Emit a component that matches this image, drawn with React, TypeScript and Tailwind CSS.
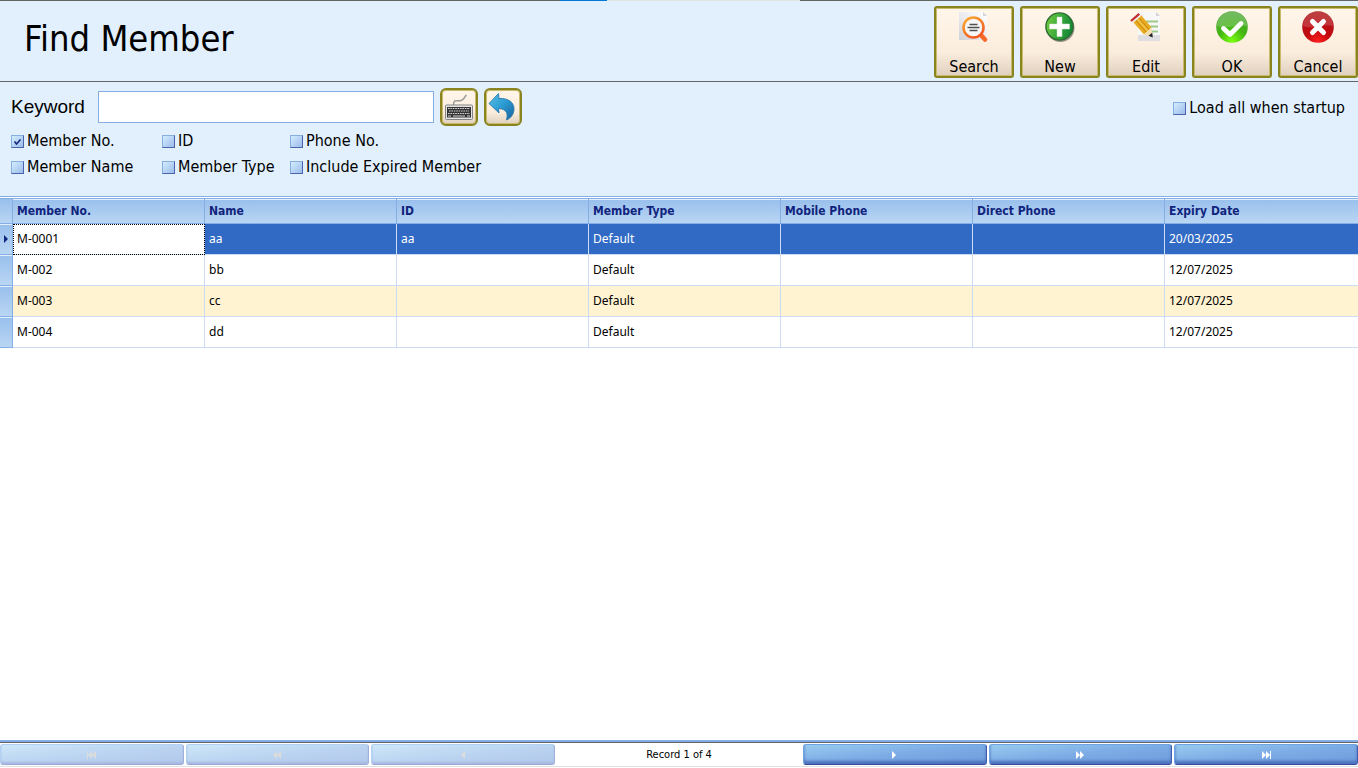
import React, { useState } from "react";
import clsx from "clsx";

interface Member {
  no: string;
  name: string;
  id: string;
  type: string;
  mobile: string;
  direct: string;
  expiry: string;
}

const MEMBERS: Member[] = [
  { no: "M-0001", name: "aa", id: "aa", type: "Default", mobile: "", direct: "", expiry: "20/03/2025" },
  { no: "M-002", name: "bb", id: "", type: "Default", mobile: "", direct: "", expiry: "12/07/2025" },
  { no: "M-003", name: "cc", id: "", type: "Default", mobile: "", direct: "", expiry: "12/07/2025" },
  { no: "M-004", name: "dd", id: "", type: "Default", mobile: "", direct: "", expiry: "12/07/2025" },
];

const COLUMNS: { key: keyof Member; title: string }[] = [
  { key: "no", title: "Member No." },
  { key: "name", title: "Name" },
  { key: "id", title: "ID" },
  { key: "type", title: "Member Type" },
  { key: "mobile", title: "Mobile Phone" },
  { key: "direct", title: "Direct Phone" },
  { key: "expiry", title: "Expiry Date" },
];

function SearchIcon() {
  return (
    <svg width="32" height="32" viewBox="0 0 32 32">
      <defs>
        <linearGradient id="page" x1="0" y1="1" x2="1" y2="0">
          <stop offset="0" stopColor="#cfd2d9" />
          <stop offset="0.5" stopColor="#ececf0" />
          <stop offset="1" stopColor="#fff" />
        </linearGradient>
        <linearGradient id="lens" x1="0" y1="0" x2="0.6" y2="1">
          <stop offset="0" stopColor="#fbae35" />
          <stop offset="1" stopColor="#f15a24" />
        </linearGradient>
      </defs>
      <path d="M1 1h24l4 4v24H1z" fill="url(#page)" />
      <path d="M25 1v4h4z" fill="#d5d5d9" />
      <path d="M22.500 23.500l4.500 5" stroke="#f4692a" strokeWidth="4.500" strokeLinecap="round" />
      <circle cx="15.500" cy="16.500" r="10" fill="#f7f7f7" stroke="url(#lens)" strokeWidth="2.600" />
      <path d="M11.500 13.500h8M9.500 16.500h12M11.500 19.500h8" stroke="#505050" strokeWidth="1.300" />
    </svg>
  );
}

function NewIcon() {
  return (
    <svg width="32" height="32" viewBox="0 0 32 32">
      <defs>
        <linearGradient id="plus" x1="0" y1="0" x2="1" y2="0.3">
          <stop offset="0" stopColor="#7fce3c" />
          <stop offset="0.5" stopColor="#3fae3c" />
          <stop offset="1" stopColor="#178a35" />
        </linearGradient>
      </defs>
      <circle cx="16.500" cy="17" r="14" fill="#00000066" />
      <circle cx="15.500" cy="15.500" r="13.600" fill="url(#plus)" stroke="#2b6b34" strokeWidth="1.400" />
      <path d="M13 6h5v7h7.500v5H18v7.500h-5V18H5.500v-5H13z" fill="#fff" stroke="#cfe6c8" strokeWidth="0.500" />
    </svg>
  );
}

function EditIcon() {
  return (
    <svg width="32" height="32" viewBox="0 0 32 32">
      <path d="M8 1h18l4 4v25H8z" fill="#f7f7f8" />
      <path d="M8 24h22v6H8z" fill="#dfdfe3" />
      <path d="M26 1v4h4z" fill="#d4d4d8" />
      <path d="M16 10.500h12M18 15.500h10M20 20.500h8" stroke="#9fc98a" strokeWidth="1.800" />
      <path d="M3 11l8-7 10.500 12.500L14 23.500z" fill="#e9ab20" />
      <path d="M5.500 9L16.500 21.500M8.500 6.500L19.500 19" stroke="#b97c0d" strokeWidth="0.800" />
      <path d="M7 7.800L18 20.300" stroke="#f4c64c" strokeWidth="1.300" />
      <path d="M1 10L9.300 2.800" stroke="#c1272d" strokeWidth="2.200" />
      <path d="M2.600 11.500L10.600 4.400" stroke="#ececec" strokeWidth="1.300" />
      <path d="M14 23.500l7.500-7L22.500 26z" fill="#f3deb2" />
      <path d="M18.500 24.800l3.700-3 .6 4.700z" fill="#222" />
    </svg>
  );
}

function OkIcon() {
  return (
    <svg width="32" height="32" viewBox="0 0 32 32">
      <defs>
        <radialGradient id="ok" cx="0.5" cy="0.95" r="0.9">
          <stop offset="0" stopColor="#7bff10" />
          <stop offset="0.5" stopColor="#43b512" />
          <stop offset="1" stopColor="#4fa838" />
        </radialGradient>
      </defs>
      <circle cx="16" cy="16" r="15.800" fill="url(#ok)" />
      <path d="M1 15a15 14.500 0 0 1 30 0c-8-3-18 4-30 0z" fill="#fff" opacity="0.2" />
      <path d="M7.500 17.500l6.500 6L25 12.500" fill="none" stroke="#fff" strokeWidth="4.800" strokeLinecap="round" strokeLinejoin="round" />
    </svg>
  );
}

function CancelIcon() {
  return (
    <svg width="32" height="32" viewBox="0 0 32 32">
      <defs>
        <radialGradient id="cancel" cx="0.5" cy="0.98" r="0.9">
          <stop offset="0" stopColor="#ff2020" />
          <stop offset="0.45" stopColor="#c0090f" />
          <stop offset="1" stopColor="#b0181c" />
        </radialGradient>
      </defs>
      <circle cx="16" cy="16" r="15.800" fill="url(#cancel)" />
      <path d="M1 15a15 14.500 0 0 1 30 0c-8-3-18 4-30 0z" fill="#fff" opacity="0.16" />
      <path d="M10.500 10.500l11 11M21.500 10.500l-11 11" stroke="#fff" strokeWidth="5" strokeLinecap="round" />
    </svg>
  );
}

function KeyboardIcon() {
  return (
    <svg width="30" height="30" viewBox="0 0 30 30">
      <path d="M9.500 13C9.500 6 13 10 17 8.500S20 5 22.500 3" fill="none" stroke="#9a9a9a" strokeWidth="1.500" />
      <rect x="1.500" y="13" width="27" height="14.500" rx="1" fill="#e4e4e4" stroke="#858585" />
      <rect x="3" y="15" width="24" height="10.500" fill="#333" />
      <path d="M4 16.500h22M5 19h20M4 21.500h22" stroke="#d8d8d8" strokeWidth="1.200" strokeDasharray="1.600 0.800" />
      <path d="M4 24h3M9 24h12M23 24h3" stroke="#d8d8d8" strokeWidth="1.200" />
    </svg>
  );
}

function UndoIcon() {
  return (
    <svg width="30" height="30" viewBox="0 0 30 30">
      <defs>
        <linearGradient id="undo" x1="0" y1="0" x2="1" y2="1">
          <stop offset="0" stopColor="#5cc0e8" />
          <stop offset="0.5" stopColor="#2a9bd2" />
          <stop offset="1" stopColor="#1b5f9c" />
        </linearGradient>
      </defs>
      <path
        d="M1 11.500L10.500 1.500 11 6.500C20 6 26 10 26 17c0 5-3 9-7.500 11 1.500-5.500 1-11-8-11.500l.5 4.500z"
        fill="url(#undo)"
        stroke="#2878ab"
        strokeWidth="0.900"
        strokeLinejoin="round"
      />
    </svg>
  );
}

const ACTIONS = [
  { label: "Search", icon: <SearchIcon /> },
  { label: "New", icon: <NewIcon /> },
  { label: "Edit", icon: <EditIcon /> },
  { label: "OK", icon: <OkIcon /> },
  { label: "Cancel", icon: <CancelIcon /> },
];

const GOLD =
  "border-2 border-[#8a8420] bg-linear-to-b from-[#fff6ea] via-[#fbeddd] via-65% to-[#dfd0be] shadow-[inset_0_0_0_1px_#c9bb6e]";

function CheckField({ label, defaultChecked = false }: { label: string; defaultChecked?: boolean }) {
  return (
    <label className="flex h-[26px] items-center gap-[3px] text-base whitespace-nowrap">
      <span className="relative flex size-[13px]">
        <input
          type="checkbox"
          defaultChecked={defaultChecked}
          className="peer size-[13px] appearance-none border border-t-[#86aee0] border-r-[#4b62ad] border-b-[#4b62ad] border-l-[#86aee0] bg-linear-to-br from-[#d3ecfd] to-[#9dbcea]"
        />
        <svg viewBox="0 0 13 13" className="pointer-events-none absolute inset-0 hidden size-[13px] peer-checked:block">
          <path d="M3.500 6.500l2 2.500 4-4.500" fill="none" stroke="#10247d" strokeWidth="1.500" />
        </svg>
      </span>
      {label}
    </label>
  );
}

// Arrow glyphs on the record navigator
const NAV_PATHS = {
  first: "M0 0h1v8H0zM5 0v8L1 4zM9 0v8L5 4z",
  prevPage: "M4 0v8L0 4zM8 0v8L4 4z",
  prev: "M6 0v8L2 4z",
  next: "M2 0v8l4-4z",
  nextPage: "M0 0v8l4-4zM4 0v8l4-4z",
  last: "M0 0v8l4-4zM4 0v8l4-4zM8 0h1v8H8z",
};

function NavButton({ kind, label, disabled, onClick }: { kind: keyof typeof NAV_PATHS; label: string; disabled: boolean; onClick: () => void }) {
  return (
    <button
      aria-label={label}
      disabled={disabled}
      onClick={onClick}
      className={clsx(
        "flex h-[21px] flex-1 items-center justify-center rounded-[3px] border",
        disabled
          ? "border-t-[#b0d0f4] border-r-[#a0b0dc] border-b-[#9ca9d8] border-l-[#b0d0f4] bg-linear-to-br from-[#cde7f9] via-[#bbd4f1] to-[#b2c8ea] text-[#dcdcdc] shadow-[inset_0_-2px_2px_#a9b9e0]"
          : "border-t-[#6fa4e4] border-r-[#3f5cb0] border-b-[#36489e] border-l-[#6fa4e4] bg-linear-to-br from-[#98cbef] via-[#7cabe5] to-[#6c9bdb] text-white shadow-[inset_0_-3px_3px_#4d70ba]"
      )}
    >
      <svg width="9" height="8" viewBox="0 0 9 8" fill="currentColor">
        <path d={NAV_PATHS[kind]} />
      </svg>
    </button>
  );
}

export default function App() {
  const [current, setCurrent] = useState(0);
  const last = MEMBERS.length - 1;
  const atStart = current === 0;
  const atEnd = current === last;

  return (
    <div className="flex min-h-screen flex-col bg-white font-['DejaVu_Sans_Condensed','Noto_Sans',sans-serif] text-black">
      {/* Window edge */}
      <div className="grid h-px grid-cols-[560fr_47fr_193fr_558fr] bg-[#636363]">
        <span />
        <span className="bg-[#0078d7]" />
        <span className="bg-[#e3e3e3]" />
      </div>

      {/* Title and actions */}
      <header className="flex items-start justify-between border-b border-[#636363] bg-[#e2f0fe]">
        <h1 className="pt-3 pl-6 text-4xl leading-[52px]">Find Member</h1>
        <div className="flex gap-[6px] pt-[5px] pb-[3px]">
          {ACTIONS.map((action) => (
            <button
              key={action.label}
              className={clsx("flex h-[72px] w-20 flex-col items-center justify-between rounded-[3px] pt-[3px] text-base leading-[18px]", GOLD)}
            >
              {action.icon}
              {action.label}
            </button>
          ))}
        </div>
      </header>

      {/* Filters */}
      <section className="flex items-start justify-between bg-[#e2f0fe] pt-[6px] pr-[13px] pb-4 pl-[11px]">
        <div>
          <div className="flex items-center">
            <label htmlFor="keyword" className="w-[87px] font-['Liberation_Sans',sans-serif] text-[19px]">
              Keyword
            </label>
            <input id="keyword" className="h-8 w-[336px] border border-[#86aee6] bg-white px-2 text-base outline-none" />
            <button aria-label="Keyboard" className={clsx("ml-[6px] flex size-[38px] items-center justify-center rounded-md", GOLD)}>
              <KeyboardIcon />
            </button>
            <button aria-label="Undo" className={clsx("ml-[6px] flex size-[38px] items-center justify-center rounded-md", GOLD)}>
              <UndoIcon />
            </button>
          </div>
          <div className="mt-[2px] grid grid-cols-[151px_128px_auto]">
            <CheckField label="Member No." defaultChecked />
            <CheckField label="ID" />
            <CheckField label="Phone No." />
            <CheckField label="Member Name" />
            <CheckField label="Member Type" />
            <CheckField label="Include Expired Member" />
          </div>
        </div>
        <div className="pt-[7px]">
          <CheckField label="Load all when startup" />
        </div>
      </section>

      {/* Members grid */}
      <main className="flex-1 border-t border-b-2 border-[#86aee6] pt-px">
        <table className="w-full table-fixed border-separate border-spacing-0 text-left text-xs">
          <colgroup>
            <col className="w-[13px]" />
            {COLUMNS.map((col) => (
              <col key={col.key} className="w-48 last:w-auto" />
            ))}
          </colgroup>
          <thead>
            <tr className="h-[26px]">
              <th className="border-y border-r border-[#86aee6] bg-linear-to-b from-[#98bfec] to-[#b9d6f3]" />
              {COLUMNS.map((col) => (
                <th
                  key={col.key}
                  className="border-y border-r border-[#86aee6] bg-linear-to-b from-[#98bfec] to-[#b9d6f3] px-1 font-bold text-[#10247d] shadow-[inset_0_1px_0_#e2f0fe] last:border-r-0"
                >
                  {col.title}
                </th>
              ))}
            </tr>
          </thead>
          <tbody className="font-['Noto_Sans',sans-serif]">
            {MEMBERS.map((member, i) => {
              const active = i === current;
              return (
                <tr
                  key={member.no}
                  onClick={() => setCurrent(i)}
                  className={clsx("h-[31px]", active ? "bg-[#316ac5] text-white" : i % 2 === 0 ? "bg-[#fff3d2]" : "bg-white")}
                >
                  <td className="border-r border-b border-[#86aee6] bg-linear-to-b from-[#98bfec] to-[#b9d6f3] p-0 shadow-[inset_0_1px_0_#e2f0fe]">
                    {active && (
                      <svg width="12" height="8" viewBox="0 0 12 8" className="block">
                        <path d="M4 0v8l4-4z" fill="#10247d" />
                      </svg>
                    )}
                  </td>
                  {COLUMNS.map((col, c) => (
                    <td
                      key={col.key}
                      className={clsx(
                        "border-r border-b border-[#cbdcf4] px-1 last:border-r-0",
                        active && c === 0 && "bg-white text-black outline-1 -outline-offset-1 outline-dotted outline-black"
                      )}
                    >
                      {member[col.key]}
                    </td>
                  ))}
                </tr>
              );
            })}
          </tbody>
        </table>
      </main>

      {/* Record navigator */}
      <footer className="border-t border-[#636363] py-px">
        <nav className="flex items-center gap-[2px] border-b border-[#e0e0e0] pb-px">
          <NavButton kind="first" label="First record" disabled={atStart} onClick={() => setCurrent(0)} />
          <NavButton kind="prevPage" label="Previous page" disabled={atStart} onClick={() => setCurrent(0)} />
          <NavButton kind="prev" label="Previous record" disabled={atStart} onClick={() => setCurrent(current - 1)} />
          <span className="w-[244px] text-center text-[11px] leading-4">
            Record {current + 1} of {MEMBERS.length}
          </span>
          <NavButton kind="next" label="Next record" disabled={atEnd} onClick={() => setCurrent(current + 1)} />
          <NavButton kind="nextPage" label="Next page" disabled={atEnd} onClick={() => setCurrent(last)} />
          <NavButton kind="last" label="Last record" disabled={atEnd} onClick={() => setCurrent(last)} />
        </nav>
      </footer>
    </div>
  );
}
